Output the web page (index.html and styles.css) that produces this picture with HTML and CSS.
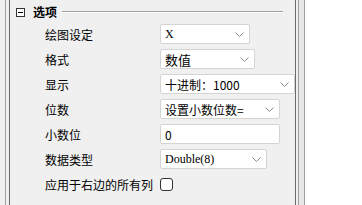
FILE: index.html
```html
<!DOCTYPE html>
<html lang="zh">
<head>
    <meta charset="UTF-8">
    <title>选项</title>
    <link rel="stylesheet" href="styles.css">
</head>
<body>
<div class="page">
    <div class="side-l"></div>
    <div class="panel">
        <div class="group-head">
            <span class="toggle"></span>
            <span class="group-title">选项</span>
            <span class="group-line"></span>
        </div>
        <div class="rows">
            <div class="lbl">绘图设定</div>
            <div class="combo w90"><span class="val serif">X</span><svg class="arrow" width="9" height="5" viewBox="0 0 9 5"><polyline points="0.5,0.5 4.5,4.5 8.5,0.5" fill="none" stroke="#8a8a8a" stroke-width="1"/></svg></div>

            <div class="lbl">格式</div>
            <div class="combo w95"><span class="val big">数值</span><svg class="arrow" width="9" height="5" viewBox="0 0 9 5"><polyline points="0.5,0.5 4.5,4.5 8.5,0.5" fill="none" stroke="#8a8a8a" stroke-width="1"/></svg></div>

            <div class="lbl">显示</div>
            <div class="combo w135"><span class="val">十进制：1000</span><svg class="arrow" width="9" height="5" viewBox="0 0 9 5"><polyline points="0.5,0.5 4.5,4.5 8.5,0.5" fill="none" stroke="#8a8a8a" stroke-width="1"/></svg></div>

            <div class="lbl">位数</div>
            <div class="combo w120"><span class="val">设置小数位数=</span><svg class="arrow" width="9" height="5" viewBox="0 0 9 5"><polyline points="0.5,0.5 4.5,4.5 8.5,0.5" fill="none" stroke="#8a8a8a" stroke-width="1"/></svg></div>

            <div class="lbl">小数位</div>
            <div class="combo w120 edit"><span class="val">0</span></div>

            <div class="lbl">数据类型</div>
            <div class="combo w107"><span class="val serif">Double(8)</span><svg class="arrow" width="9" height="5" viewBox="0 0 9 5"><polyline points="0.5,0.5 4.5,4.5 8.5,0.5" fill="none" stroke="#8a8a8a" stroke-width="1"/></svg></div>

            <div class="lbl">应用于右边的所有列</div>
            <div class="chk-cell"><span class="chk"></span></div>
        </div>
    </div>
    <div class="side-r"></div>
    <div class="scroll"></div>
    <div class="blank"></div>
</div>
</body>
</html>
```

FILE: styles.css
```css
*{
    box-sizing: border-box;
}
body{
    margin: 0;
    background: #f0f0f0;
    font-family: "Noto Sans CJK SC", "Liberation Sans", sans-serif;
    font-size: 12px;
    color: #000;
}
.page{
    display: flex;
    height: 205px;
    overflow: hidden;
}
.side-l{
    margin-left: 5px;
    width: 5px;
    border-left: 1px solid #a0a0a0;
    border-right: 1px solid #696969;
}
.panel{
    flex: 1;
}
.group-head{
    display: flex;
    align-items: center;
    height: 14px;
    margin-top: 5px;
    padding-left: 6px;
    padding-right: 12px;
}
.toggle{
    position: relative;
    width: 9px;
    height: 9px;
    border: 1px solid #333;
    background: #fff;
}
.toggle::after{
    content: "";
    position: absolute;
    left: 1px;
    right: 1px;
    top: 3px;
    height: 1px;
    background: #000;
}
.group-title{
    margin-left: 8px;
    font-weight: bold;
    font-size: 12px;
    line-height: 14px;
}
.group-line{
    flex: 1;
    margin-left: 5px;
    height: 2px;
    border-top: 1px solid #a0a0a0;
    border-bottom: 1px solid #fff;
}
.rows{
    display: grid;
    grid-template-columns: 115px 1fr;
    grid-auto-rows: 20px;
    row-gap: 5px;
    margin-top: 5px;
    padding-left: 35px;
}
.lbl{
    display: flex;
    align-items: center;
    white-space: nowrap;
}
.combo{
    display: flex;
    align-items: center;
    justify-content: space-between;
    height: 20px;
    padding: 0 5px 0 4px;
    background: #fff;
    border: 1px solid #d4d4d4;
    border-radius: 2px;
}
.val{
    white-space: nowrap;
}
.serif{
    font-family: "Liberation Serif", "Noto Sans CJK SC", serif;
    font-size: 12px;
}
.big{
    font-size: 13px;
}
.arrow{
    flex: none;
}
.w90{ width: 90px; }
.w95{ width: 95px; }
.w107{ width: 107px; }
.w120{ width: 120px; }
.w135{ width: 135px; }
.chk-cell{
    display: flex;
    align-items: center;
}
.chk{
    width: 13px;
    height: 13px;
    border: 1px solid #333;
    border-radius: 3px;
    background: #fff;
}
.side-r{
    width: 4px;
    border-left: 1px solid #696969;
    border-right: 1px solid #a0a0a0;
}
.scroll{
    width: 6px;
    background: #e8e8e8;
    border-right: 1px solid #a0a0a0;
}
.blank{
    flex: 1;
    background: #fff;
}
```
